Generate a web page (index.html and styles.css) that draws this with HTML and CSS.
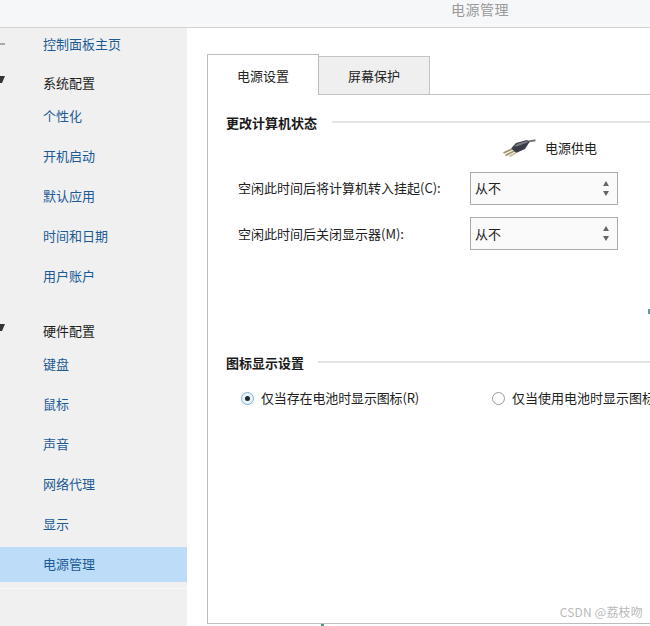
FILE: index.html
```html
<!DOCTYPE html>
<html lang="zh-CN">
<head>
<meta charset="utf-8">
<title>电源管理</title>
<link rel="stylesheet" href="styles.css">
</head>
<body>
<header class="titlebar">电源管理</header>
<div class="shell">
  <nav class="sidebar">
    <a class="row home"><span class="gutter"><svg width="6" height="2" viewBox="0 0 6 2"><rect width="5" height="1" y="0.5" fill="#666"/></svg></span><span>控制面板主页</span></a>
    <div class="row heading first"><span class="gutter"><svg width="6" height="8" viewBox="0 0 6 8"><path d="M0 0H5L2 7H0Z" fill="#333"/></svg></span><span>系统配置</span></div>
    <a class="row link tight"><span class="gutter"></span><span>个性化</span></a>
    <a class="row link"><span class="gutter"></span><span>开机启动</span></a>
    <a class="row link"><span class="gutter"></span><span>默认应用</span></a>
    <a class="row link"><span class="gutter"></span><span>时间和日期</span></a>
    <a class="row link"><span class="gutter"></span><span>用户账户</span></a>
    <div class="row heading second"><span class="gutter"><svg width="6" height="8" viewBox="0 0 6 8"><path d="M0 0H5L2 7H0Z" fill="#333"/></svg></span><span>硬件配置</span></div>
    <a class="row link tight"><span class="gutter"></span><span>键盘</span></a>
    <a class="row link"><span class="gutter"></span><span>鼠标</span></a>
    <a class="row link"><span class="gutter"></span><span>声音</span></a>
    <a class="row link"><span class="gutter"></span><span>网络代理</span></a>
    <a class="row link"><span class="gutter"></span><span>显示</span></a>
    <a class="row link selected"><span class="gutter"></span><span>电源管理</span></a>
    <div class="sidebar-rule"></div>
  </nav>
  <main class="content">
    <div class="tabs">
      <div class="tab active">电源设置</div>
      <div class="tab">屏幕保护</div>
      <div class="tab-fill"></div>
    </div>
    <section class="panel">
      <div class="group-title upper"><span>更改计算机状态</span><i class="rule"></i></div>
      <div class="source">
        <svg class="plug" width="33" height="19" viewBox="0 0 33 19">
          <path d="M22 4C26 2 29 1.200 32.500 1.500" fill="none" stroke="#6f7178" stroke-width="2"/>
          <path d="M8 9.500L13 4L24 1L26.500 3L22 10L13 14Z" fill="#3a3d46"/>
          <path d="M11 7.500L14.500 4.800L24 2L25 3.200L15 7Z" fill="#7b7e88"/>
          <path d="M9 10L0.500 14" stroke="#a39368" stroke-width="1.800" fill="none"/>
          <path d="M11 12L2.500 16.500" stroke="#a39368" stroke-width="1.800" fill="none"/>
          <path d="M13 13.500L6.500 17.500" stroke="#c7bc98" stroke-width="1.500" fill="none"/>
        </svg>
        <span>电源供电</span>
      </div>
      <div class="field first-field">
        <label>空闲此时间后将计算机转入挂起(C):</label>
        <div class="select"><span>从不</span><span class="spin"><b class="up"></b><b class="down"></b></span></div>
      </div>
      <div class="field second-field">
        <label>空闲此时间后关闭显示器(M):</label>
        <div class="select"><span>从不</span><span class="spin"><b class="up"></b><b class="down"></b></span></div>
      </div>
      <div class="group-title lower"><span>图标显示设置</span><i class="rule"></i></div>
      <div class="radios">
        <div class="radio-item one"><span class="radio checked"></span><span>仅当存在电池时显示图标(R)</span></div>
        <div class="radio-item"><span class="radio"></span><span>仅当使用电池时显示图标</span></div>
      </div>
    </section>
  </main>
</div>
<i class="speck teal"></i>
<i class="speck green"></i>
<div class="watermark">CSDN @荔枝吻</div>
</body>
</html>
```
FILE: styles.css
```css
* { box-sizing: border-box; }
html, body { margin: 0; height: 100%; }
body {
  width: 650px;
  height: 626px;
  overflow: hidden;
  position: relative;
  background: #fff;
  color: #222;
  font: 13px/18px "Noto Sans CJK SC", "Noto Sans", sans-serif;
  display: flex;
  flex-direction: column;
}
.titlebar {
  height: 28px;
  flex: none;
  background: #f6f7f8;
  border-bottom: 1px solid #d3d3d3;
  padding-left: 451px;
  font-size: 14px;
  line-height: 19px;
  letter-spacing: 0.5px;
  color: #9a9a9a;
}
.shell { flex: 1; display: flex; min-height: 0; }
.sidebar {
  width: 187px;
  flex: none;
  background: #f0f0f0;
  display: flex;
  flex-direction: column;
  padding-top: 7px;
}
.row { display: flex; align-items: center; height: 18px; white-space: nowrap; }
.gutter { width: 43px; flex: none; display: flex; align-items: center; }
.home, .link { color: #1c5a96; }
.heading { color: #1c1c1c; }
.heading .gutter { height: 18px; align-items: flex-start; padding-top: 2px; }
.heading.first { margin-top: 21px; }
.heading.second { margin-top: 28px; }
.link { height: 35px; margin-top: 5px; padding-bottom: 2px; }
.link.tight { margin-top: 7px; }
.link.selected { background: #bcdcf8; }
.sidebar-rule { height: 1px; margin-top: 6px; background: #f8f8f8; }
.content { flex: 1; min-width: 0; padding: 26px 0 2px 20px; display: flex; flex-direction: column; }
.tabs { display: flex; align-items: flex-end; height: 41px; flex: none; }
.tab {
  width: 111px;
  height: 39px;
  background: #efefef;
  border: 1px solid #c4c4c4;
  border-left: 0;
  text-align: center;
  line-height: 38px;
  color: #222;
}
.tab.active {
  width: 112px;
  height: 41px;
  background: #fff;
  border: 1px solid #bdbdbd;
  border-bottom: 0;
  line-height: 41px;
}
.tab-fill { flex: 1; border-bottom: 1px solid #c4c4c4; }
.panel {
  flex: 1;
  border: 1px solid #bdbdbd;
  border-top: 0;
  border-right: 0;
  padding: 19px 0 0 18px;
  display: flex;
  flex-direction: column;
}
.group-title { display: flex; align-items: center; gap: 14px; font-weight: 700; color: #1a1a1a; height: 18px; }
.group-title.upper { gap: 15px; }
.rule { flex: 1; height: 2px; margin-top: -2px; background: #e4e4e4; }
.source { display: flex; align-items: center; gap: 9px; margin: 6px 0 0 277px; height: 20px; }
.field { display: flex; align-items: center; margin: 12px 0 0 12px; height: 33px; }
.first-field { margin-top: 14px; }
.field label { width: 232px; flex: none; white-space: nowrap; padding-bottom: 2px; }
.second-field label { padding-bottom: 0; }
.select {
  width: 148px;
  height: 33px;
  border: 1px solid #ababab;
  background: #fafafa;
  display: flex;
  align-items: center;
  justify-content: space-between;
  padding: 0 8px 2px 4px;
}
.second-field .select { padding-bottom: 0; }
.spin { display: flex; flex-direction: column; gap: 5px; margin-top: 2px; }
.second-field .spin { margin-top: 0; }
.spin b { display: block; width: 0; height: 0; border-left: 3px solid transparent; border-right: 3px solid transparent; }
.spin .up { border-bottom: 5px solid #666; }
.spin .down { border-top: 5px solid #666; }
.lower { margin-top: 104px; }
.radios { display: flex; align-items: center; margin: 17px 0 0 15px; white-space: nowrap; }
.radio-item { display: flex; align-items: center; gap: 7px; }
.radio-item.one { width: 251px; flex: none; letter-spacing: -0.14px; }
.radio {
  width: 13px;
  height: 13px;
  flex: none;
  border: 1px solid #9a9a9a;
  border-radius: 50%;
  background: #fff;
  display: flex;
  align-items: center;
  justify-content: center;
}
.radio.checked { border-color: #7fb2de; background: #e8f2fb; }
.radio.checked::after { content: ""; width: 5px; height: 5px; border-radius: 50%; background: #1c2a38; }
.speck { position: absolute; width: 2px; height: 5px; }
.speck.teal { left: 648px; top: 309px; background: #4aa3a8; }
.speck.green { left: 321px; top: 624px; width: 3px; height: 2px; background: #3aa37a; }
.watermark {
  position: absolute;
  right: 7px;
  top: 603px;
  font-size: 12px;
  line-height: 17px;
  letter-spacing: 0.2px;
  color: #b9b9b9;
}
```
